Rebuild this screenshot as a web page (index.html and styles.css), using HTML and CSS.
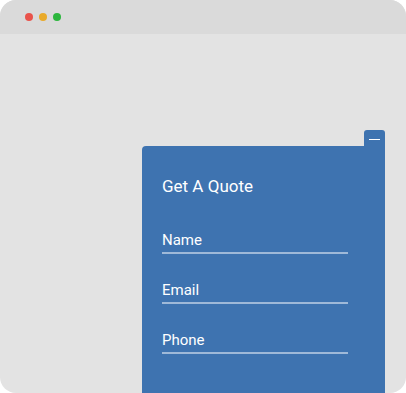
FILE: index.html
```html
<!DOCTYPE html>
<html>
    <head>
        <meta charset="utf-8">
        <title>Get A Quote</title>
        <link rel="stylesheet" href="styles.css">
    </head>
    <body>
        <div class="window">
            <div class="titlebar">
                <span class="dot red"></span>
                <span class="dot yellow"></span>
                <span class="dot green"></span>
            </div>
            <div class="content">
                <div class="widget">
                    <div class="minimize"><span></span></div>
                    <div class="panel">
                        <h2 class="panel-title">Get A Quote</h2>
                        <label class="field">Name</label>
                        <label class="field">Email</label>
                        <label class="field">Phone</label>
                    </div>
                </div>
            </div>
        </div>
    </body>
</html>
```
FILE: styles.css
```css
body {
    margin: 0;
    background-color: white;
    font-family: Roboto, "Liberation Sans", sans-serif;
}
.window {
    width: 406px;
    height: 393px;
    border-radius: 16px;
    overflow: hidden;
    background-color: #e3e3e3;
    display: flex;
    flex-direction: column;
}
.titlebar {
    height: 34px;
    flex-shrink: 0;
    background-color: #dadada;
    display: flex;
    align-items: center;
    gap: 6px;
    padding-left: 25px;
}
.dot {
    width: 8px;
    height: 8px;
    border-radius: 50%;
}
.red { background-color: #e9534b; }
.yellow { background-color: #e9aa2a; }
.green { background-color: #2cb63d; }

.content {
    flex: 1;
    display: flex;
    padding-left: 142px;
    padding-top: 96px;
}
.widget {
    width: 243px;
    display: flex;
    flex-direction: column;
}
.minimize {
    align-self: flex-end;
    width: 21px;
    height: 16px;
    background-color: #3e73b0;
    border-radius: 3px 3px 0 0;
    display: flex;
    justify-content: center;
    padding-top: 9px;
    box-sizing: border-box;
}
.minimize span {
    width: 11px;
    height: 1px;
    background-color: white;
}
.panel {
    flex: 1;
    background-color: #3e73b0;
    border-radius: 4px 0 0 0;
    padding: 30px 20px 0;
    color: white;
}
.panel-title {
    margin: 0 0 34px;
    font-size: 17px;
    font-weight: normal;
    line-height: 20px;
}
.field {
    display: block;
    width: 186px;
    font-size: 15px;
    line-height: 20px;
    padding-bottom: 2px;
    border-bottom: 2px solid rgba(255, 255, 255, 0.5);
    margin-bottom: 26px;
}
```
